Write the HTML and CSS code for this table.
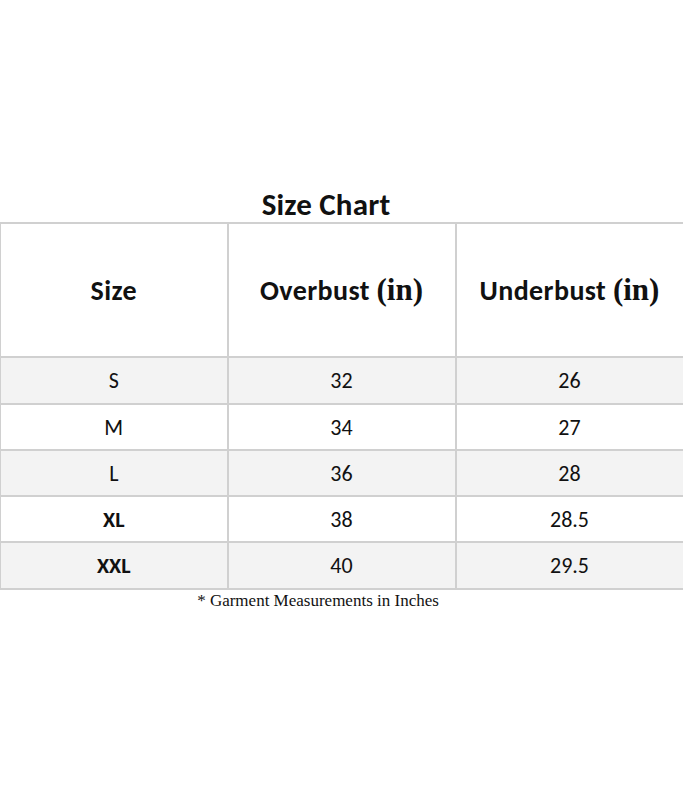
FILE: index.html
```html
<!DOCTYPE html>
<html>
<head>
<meta charset="utf-8">
<link rel="stylesheet" href="styles.css">
</head>
<body>
<div class="page">
  <h1 class="title">Size Chart</h1>
  <table class="chart">
    <colgroup><col class="c1"><col class="c2"><col class="c3"></colgroup>
    <thead>
      <tr class="head"><th>Size</th><th>Overbust <span class="serif">(in)</span></th><th>Underbust <span class="serif">(in)</span></th></tr>
    </thead>
    <tbody>
      <tr class="alt tall"><td>S</td><td>32</td><td>26</td></tr>
      <tr><td>M</td><td>34</td><td>27</td></tr>
      <tr class="alt"><td>L</td><td>36</td><td>28</td></tr>
      <tr><td class="b">XL</td><td>38</td><td>28.5</td></tr>
      <tr class="alt tall"><td class="b">XXL</td><td>40</td><td>29.5</td></tr>
    </tbody>
  </table>
  <p class="note">* Garment Measurements in Inches</p>
</div>
</body>
</html>
```
FILE: styles.css
```css
html, body { margin: 0; padding: 0; background: #fff; }
body { font-family: Carlito, Lato, "Open Sans", "Liberation Sans", sans-serif; color: #111; }
.page { padding-top: 186px; width: 683px; }
.title { margin: 0; font-size: 31px; font-weight: 700; text-align: center; width: 652px; line-height: 36px; letter-spacing: 0.2px; }
.chart { border-collapse: collapse; width: 683px; table-layout: fixed; }
.c1 { width: 227px; } .c2 { width: 228px; } .c3 { width: 228px; }
.chart th, .chart td { border: 2px solid #d0d0d0; text-align: center; padding: 0; }
.chart tr > :first-child { border-left: 1px solid #d0d0d0; }
.head th { height: 132px; font-size: 28px; font-weight: 700; letter-spacing: 0.4px; }
.serif { font-family: "Liberation Serif", "DejaVu Serif", serif; font-weight: 700; font-size: 31px; letter-spacing: 0; }
.chart td { height: 44px; font-size: 22px; font-weight: 400; }
.chart .tall td { height: 45px; }
.chart td.b { font-weight: 700; }
.alt td { background: #f3f3f3; }
.note { margin: 1px 0 0 0; font-family: "Liberation Serif", "DejaVu Serif", serif; font-size: 17px; text-align: center; width: 636px; }
```
